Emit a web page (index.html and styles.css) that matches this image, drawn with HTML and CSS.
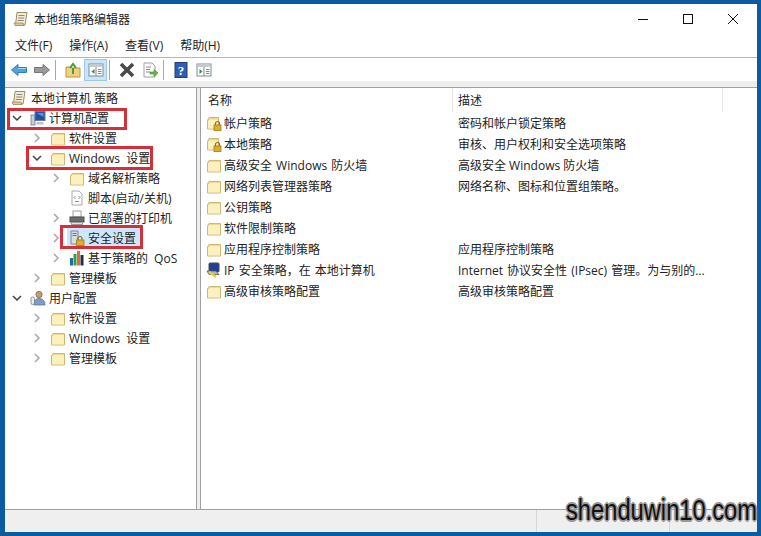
FILE: index.html
```html
<!DOCTYPE html>
<html lang="zh-CN">
<head>
    <meta charset="UTF-8">
    <title>本地组策略编辑器</title>
    <link rel="stylesheet" href="styles.css">
</head>
<body>
    <svg class="defs" width="0" height="0">
        <symbol id="folder" viewBox="0 0 16 16">
            <path d="M1.500 6L3 3.500h11.500V15h-13z" fill="#efd98e" stroke="#cdb877" stroke-width="1"/>
            <path d="M2 6.500l2-1.500h10v9.500H2z" fill="#fcf0bf"/>
        </symbol>
        <symbol id="lockfolder" viewBox="0 0 16 16">
            <path d="M1.500 5.500L3 2.500h9.500V14h-11z" fill="#efd98e" stroke="#cdb877" stroke-width="1"/>
            <path d="M2 6l2-1.500h8V13.500H2z" fill="#fcf0bf"/>
            <path d="M9.500 10V8.500a2 2 0 0 1 4 0V10" fill="none" stroke="#8a6a1e" stroke-width="1.200"/>
            <rect x="8" y="10" width="7" height="5.500" fill="#e2ab2c" stroke="#a07a1a" stroke-width=".8"/>
        </symbol>
        <symbol id="scroll" viewBox="0 0 16 16">
            <path d="M4 1.500h10l-2 12.500H2.500z" fill="#f4ecd2" stroke="#9c8c62"/>
            <path d="M5.500 4.500h6M5.200 7h6M4.800 9.500h6" stroke="#7b7b7b" stroke-width=".9"/>
            <path d="M1 12h9l1 2.500H2z" fill="#dcc99a" stroke="#9c8c62" stroke-width=".8"/>
        </symbol>
        <symbol id="chev-r" viewBox="0 0 10 10">
            <path d="M3 1l4 4-4 4" fill="none" stroke="#a6a6a6" stroke-width="1.500"/>
        </symbol>
        <symbol id="chev-d" viewBox="0 0 10 10">
            <path d="M1 3l4 4 4-4" fill="none" stroke="#404040" stroke-width="1.500"/>
        </symbol>
        <symbol id="computer" viewBox="0 0 16 16">
            <rect x="1" y="5" width="4" height="10" fill="#c5cfdc" stroke="#6b7d96" stroke-width=".8"/>
            <rect x="5" y="1.500" width="10" height="9" fill="#1f4fa8" stroke="#6b7d96"/>
            <path d="M6.500 3h7v4z" fill="#5a92e0"/>
            <path d="M7 12h6l1 2.500H6z" fill="#b8c4d4"/>
        </symbol>
        <symbol id="user" viewBox="0 0 16 16">
            <circle cx="9" cy="4.500" r="3.200" fill="#c99a74" stroke="#7a6048" stroke-width=".7"/>
            <path d="M4 15c0-5 2-6.500 5-6.500s6 1.500 6 6.500z" fill="#7f9cc4" stroke="#5c6f8c" stroke-width=".7"/>
            <rect x="1" y="7" width="3.500" height="7.500" rx="1.500" fill="#e8eef5" stroke="#6b7d96" stroke-width=".8"/>
        </symbol>
        <symbol id="script" viewBox="0 0 16 16">
            <path d="M3 1h7l3 3v11H3z" fill="#fff" stroke="#a8a8a8"/>
            <path d="M6.500 6L5 7.500 6.500 9M9.500 6L11 7.500 9.500 9M6 11.500h4" fill="none" stroke="#6f7f90" stroke-width=".9"/>
        </symbol>
        <symbol id="printer" viewBox="0 0 16 16">
            <rect x="4" y="1" width="8" height="6" fill="#fff" stroke="#a0a0a0"/>
            <rect x="1" y="7" width="14" height="5" fill="#6d6d6d" stroke="#4f4f4f"/>
            <path d="M2 12.500h12v2.500H2z" fill="#9a9a9a"/>
            <path d="M3 13.500h10" stroke="#e0e0e0"/>
        </symbol>
        <symbol id="security" viewBox="0 0 16 16">
            <path d="M2 1h7v13H2z" fill="#d7dde4" stroke="#7c8792"/>
            <path d="M3.500 3.500h4M3.500 5.500h4" stroke="#6a7580"/>
            <path d="M9 10V8.500a2 2 0 0 1 4 0V10" fill="none" stroke="#8a6a1e" stroke-width="1.200"/>
            <rect x="7.500" y="10" width="7.500" height="5.500" fill="#e2ab2c" stroke="#a07a1a" stroke-width=".8"/>
        </symbol>
        <symbol id="chart" viewBox="0 0 16 16">
            <rect x="1" y="8" width="3" height="7.500" fill="#1f6f9c"/>
            <rect x="4.500" y="4" width="3" height="11.500" fill="#3a9a4a"/>
            <rect x="8" y="1" width="3" height="14.500" fill="#d9703a"/>
            <rect x="11.500" y="5" width="3" height="10.500" fill="#1d2f4a"/>
        </symbol>
        <symbol id="ipsec" viewBox="0 0 16 16">
            <rect x="3" y="1" width="10" height="9" rx="1" fill="#1f3f9a" stroke="#4b4b4b"/>
            <path d="M1 9h9l3 3.500H3z" fill="#b5b5b5" stroke="#555" stroke-width=".8"/>
            <path d="M3 10l7 5" stroke="#e8d42c" stroke-width="2.400"/>
        </symbol>
    </svg>

    <div class="window">
        <header class="titlebar">
            <svg class="ico"><use href="#scroll"/></svg>
            <span class="title">本地组策略编辑器</span>
            <div class="controls">
                <svg class="ctrl" viewBox="0 0 12 12"><path d="M1 6.500h10" stroke="#111" stroke-width="1"/></svg>
                <svg class="ctrl" viewBox="0 0 12 12"><rect x="1.500" y="1.500" width="9" height="9" fill="none" stroke="#111"/></svg>
                <svg class="ctrl" viewBox="0 0 12 12"><path d="M1 1l10 10M11 1L1 11" stroke="#111" stroke-width="1"/></svg>
            </div>
        </header>

        <nav class="menubar">
            <span>文件(F)</span>
            <span>操作(A)</span>
            <span>查看(V)</span>
            <span>帮助(H)</span>
        </nav>

        <div class="toolbar">
            <button class="tool"><svg viewBox="0 0 16 16"><path d="M0.500 8L7 2.500V5.500h8.500v5H7v3z" fill="#4da3dc" stroke="#2f7fb8"/><path d="M7 6.500h8" stroke="#a8d8f4"/></svg></button>
            <button class="tool"><svg viewBox="0 0 16 16"><path d="M15.500 8L9 2.500V5.500H.5v5H9v3z" fill="#9a9a9a" stroke="#747474"/></svg></button>
            <i class="sep"></i>
            <button class="tool"><svg viewBox="0 0 16 16"><path d="M1 5h5l1 1h8v9H1z" fill="#f0d27a" stroke="#b8963f"/><path d="M8 12V6M5 6l3-4 3 4" fill="none" stroke="#4f9a3a" stroke-width="2"/></svg></button>
            <button class="tool on"><svg viewBox="0 0 16 16"><rect x="1" y="2" width="14" height="12" fill="#fff" stroke="#7c8a94"/><path d="M1.500 2.500h13v2.500h-13z" fill="#c4ccd2"/><path d="M8 5v9" stroke="#7c8a94"/><path d="M6.500 7L3.500 9.500 6.500 12z" fill="#2f8f4f"/><path d="M10 7.500h3.500M10 9.500h3.500M10 11.500h3.500" stroke="#7c8a94"/></svg></button>
            <i class="sep"></i>
            <button class="tool"><svg viewBox="0 0 16 16"><path d="M2 2l12 12M14 2L2 14" stroke="#4a4a4a" stroke-width="3.600"/></svg></button>
            <button class="tool"><svg viewBox="0 0 16 16"><path d="M2 1h8l3 3v11H2z" fill="#fff" stroke="#a0a0a0"/><path d="M4 5h5M4 7.500h4M4 10h4" stroke="#8a8a8a"/><path d="M8 10h4V7.500l4 3.500-4 3.500V12H8z" fill="#62b94a" stroke="#3f8a2c" stroke-width=".6"/></svg></button>
            <i class="sep"></i>
            <button class="tool"><svg viewBox="0 0 16 16"><rect x="2" y="0.500" width="12" height="15" fill="#2f5fb0" stroke="#1f3f80"/><text x="8" y="12.500" text-anchor="middle" class="help">?</text></svg></button>
            <button class="tool"><svg viewBox="0 0 16 16"><rect x="1" y="2" width="14" height="12" fill="#fff" stroke="#7c8a94"/><path d="M1.500 2.500h13v2.500h-13z" fill="#c4ccd2"/><path d="M8 5v9" stroke="#7c8a94"/><path d="M3.500 7l3 2.500-3 2.500z" fill="#2f8f4f"/><path d="M10 7.500h3.500M10 9.500h3.500M10 11.500h3.500" stroke="#7c8a94"/></svg></button>
        </div>

        <div class="strip"></div>

        <main class="panes">
            <aside class="tree">
                <div class="node root"><svg class="ico"><use href="#scroll"/></svg><span>本地计算机 策略</span></div>
                <div class="node"><svg class="chev"><use href="#chev-d"/></svg><svg class="ico"><use href="#computer"/></svg><span>计算机配置</span></div>
                <div class="node l1"><svg class="chev"><use href="#chev-r"/></svg><svg class="ico"><use href="#folder"/></svg><span>软件设置</span></div>
                <div class="node l1"><svg class="chev"><use href="#chev-d"/></svg><svg class="ico"><use href="#folder"/></svg><span class="wide">Windows 设置</span></div>
                <div class="node l2"><svg class="chev"><use href="#chev-r"/></svg><svg class="ico"><use href="#folder"/></svg><span>域名解析策略</span></div>
                <div class="node l2"><span class="chev"></span><svg class="ico"><use href="#script"/></svg><span>脚本(启动/关机)</span></div>
                <div class="node l2"><svg class="chev"><use href="#chev-r"/></svg><svg class="ico"><use href="#printer"/></svg><span>已部署的打印机</span></div>
                <div class="node l2"><svg class="chev"><use href="#chev-r"/></svg><div class="selected"><svg class="ico"><use href="#security"/></svg><span>安全设置</span></div></div>
                <div class="node l2"><svg class="chev"><use href="#chev-r"/></svg><svg class="ico"><use href="#chart"/></svg><span class="wide">基于策略的 QoS</span></div>
                <div class="node l1"><svg class="chev"><use href="#chev-r"/></svg><svg class="ico"><use href="#folder"/></svg><span>管理模板</span></div>
                <div class="node"><svg class="chev"><use href="#chev-d"/></svg><svg class="ico"><use href="#user"/></svg><span>用户配置</span></div>
                <div class="node l1"><svg class="chev"><use href="#chev-r"/></svg><svg class="ico"><use href="#folder"/></svg><span>软件设置</span></div>
                <div class="node l1"><svg class="chev"><use href="#chev-r"/></svg><svg class="ico"><use href="#folder"/></svg><span class="wide">Windows 设置</span></div>
                <div class="node l1"><svg class="chev"><use href="#chev-r"/></svg><svg class="ico"><use href="#folder"/></svg><span>管理模板</span></div>
            </aside>

            <section class="list">
                <div class="head">
                    <span class="col-name">名称</span>
                    <span class="col-desc">描述</span>
                    <span class="col-end"></span>
                </div>
                <div class="row"><span class="col-name"><svg class="ico"><use href="#lockfolder"/></svg>帐户策略</span><span class="col-text">密码和帐户锁定策略</span></div>
                <div class="row"><span class="col-name"><svg class="ico"><use href="#lockfolder"/></svg>本地策略</span><span class="col-text">审核、用户权利和安全选项策略</span></div>
                <div class="row"><span class="col-name"><svg class="ico"><use href="#folder"/></svg>高级安全 Windows 防火墙</span><span class="col-text">高级安全 Windows 防火墙</span></div>
                <div class="row"><span class="col-name"><svg class="ico"><use href="#folder"/></svg>网络列表管理器策略</span><span class="col-text">网络名称、图标和位置组策略。</span></div>
                <div class="row"><span class="col-name"><svg class="ico"><use href="#folder"/></svg>公钥策略</span><span class="col-text"></span></div>
                <div class="row"><span class="col-name"><svg class="ico"><use href="#folder"/></svg>软件限制策略</span><span class="col-text"></span></div>
                <div class="row"><span class="col-name"><svg class="ico"><use href="#folder"/></svg>应用程序控制策略</span><span class="col-text">应用程序控制策略</span></div>
                <div class="row"><span class="col-name"><svg class="ico"><use href="#ipsec"/></svg>IP 安全策略，在 本地计算机</span><span class="col-text wide-text">Internet 协议安全性 (IPsec) 管理。为与别的...</span></div>
                <div class="row"><span class="col-name"><svg class="ico"><use href="#folder"/></svg>高级审核策略配置</span><span class="col-text">高级审核策略配置</span></div>
            </section>
        </main>

        <footer class="statusbar">
            <span class="cell-main"></span>
            <span class="cell-mid"></span>
            <span class="cell-end"></span>
        </footer>
    </div>

    <!-- 红框标注 -->
    <div class="mark mark1"></div>
    <div class="mark mark2"></div>
    <div class="mark mark3"></div>

    <div class="watermark">shenduwin10.com</div>
</body>
</html>
```

FILE: styles.css
```css
* {
    box-sizing: border-box;
}
html,
body {
    margin: 0;
    height: 100%;
}
body {
    background-color: #0b5aa2;
    font-family: "Open Sans", "Noto Sans CJK SC", sans-serif;
    font-size: 12px;
    color: #222;
    overflow: hidden;
    position: relative;
}
.defs {
    position: absolute;
}

.window {
    height: 528px;
    width: 752px;
    margin: 4px 0 0 5px;
    background-color: #fff;
    display: flex;
    flex-direction: column;
}
.ico {
    width: 16px;
    height: 16px;
    flex: none;
}

/* 标题栏 */
.titlebar {
    height: 29px;
    flex: none;
    display: flex;
    align-items: center;
    padding-left: 8px;
}
.title {
    margin-left: 5px;
    flex: 1;
}
.controls {
    display: flex;
    gap: 33px;
    padding-right: 18px;
}
.ctrl {
    width: 12px;
    height: 12px;
}

.menubar {
    height: 25px;
    flex: none;
    display: flex;
    align-items: center;
    gap: 17px;
    padding-left: 10px;
    border-bottom: 1px solid #b5b5b5;
}

.toolbar {
    height: 23px;
    flex: none;
    display: flex;
    align-items: center;
    padding-left: 2px;
}
.tool {
    width: 23px;
    height: 22px;
    padding: 0;
    border: 1px solid transparent;
    background: none;
    display: flex;
    align-items: center;
    justify-content: center;
}
.tool svg {
    width: 16px;
    height: 16px;
}
.tool.on {
    background-color: #cce4f7;
    border-color: #9cc8ea;
}
.help {
    font-family: "Liberation Serif", serif;
    font-size: 13px;
    font-weight: bold;
    fill: #fff;
}
.sep {
    width: 1px;
    height: 20px;
    margin: 0 5px 0 2px;
    background-color: #a8a8a8;
}
.strip {
    height: 6px;
    flex: none;
    background-color: #eeeeee;
}

/* 左右窗格 */
.panes {
    flex: 1;
    min-height: 0;
    display: flex;
    background-color: #eeeeee;
    border-top: 1px solid #a0a0a0;
    border-bottom: 1px solid #a0a0a0;
}
.tree {
    width: 192px;
    flex: none;
    background-color: #fff;
    border-right: 1px solid #a0a0a0;
}
.list {
    margin-left: 3px;
    flex: 1;
    background-color: #fff;
    border-left: 1px solid #a0a0a0;
}

.node {
    height: 20px;
    display: flex;
    align-items: center;
    padding-left: 7px;
}
.node.l1 {
    padding-left: 27px;
}
.node.l2 {
    padding-left: 46px;
}
.node.root {
    padding-left: 6px;
}
.chev {
    width: 10px;
    height: 10px;
    margin-right: 8px;
    flex: none;
}
.node .ico {
    margin-right: 3px;
}
.node.root .ico {
    margin-right: 4px;
}
.wide {
    word-spacing: 3px;
}
.selected {
    display: flex;
    align-items: center;
    height: 20px;
    margin-left: -2px;
    padding: 0 5px 0 2px;
    background-color: #cce8ff;
}

.head {
    height: 24px;
    display: flex;
    align-items: center;
}
.head span {
    height: 24px;
    line-height: 25px;
}
.col-name {
    width: 251px;
    flex: none;
    padding-left: 5px;
    display: flex;
    align-items: center;
    word-spacing: 1px;
}
.col-name .ico {
    margin-right: 2px;
}
.head .col-name {
    padding-left: 7px;
}
.col-desc {
    width: 270px;
    flex: none;
    padding-left: 5px;
    border-left: 1px solid #e5e5e5;
}
.col-end {
    flex: 1;
    border-left: 1px solid #e5e5e5;
}
.row {
    height: 21px;
    display: flex;
    align-items: center;
}
.col-text {
    padding-left: 6px;
    white-space: nowrap;
}
.wide-text {
    word-spacing: 1px;
}

.statusbar {
    height: 22px;
    flex: none;
    display: flex;
    background-color: #efefef;
}
.cell-main {
    width: 531px;
}
.cell-mid {
    width: 133px;
    border-left: 1px solid #d8d8d8;
}
.cell-end {
    flex: 1;
    border-left: 1px solid #d8d8d8;
}

/* 覆盖层 */
.mark {
    position: absolute;
    border: 3px solid #d5303a;
}
.mark1 {
    left: 7px;
    top: 108px;
    width: 120px;
    height: 22px;
}
.mark2 {
    left: 26px;
    top: 146px;
    width: 127px;
    height: 24px;
}
.mark3 {
    left: 60px;
    top: 225px;
    width: 83px;
    height: 24px;
}
.watermark {
    position: absolute;
    left: 566px;
    top: 492px;
    font-family: "Liberation Sans", sans-serif;
    font-size: 30px;
    line-height: 36px;
    color: #111;
    white-space: nowrap;
    transform: scaleX(0.79);
    transform-origin: left center;
    text-shadow: 1px 1px 0 #999, -1px -1px 0 #999, 1px -1px 0 #999, -1px 1px 0 #999, 2px 0 0 #999, -2px 0 0 #999, 0 2px 0 #999, 0 -2px 0 #999;
}
```
